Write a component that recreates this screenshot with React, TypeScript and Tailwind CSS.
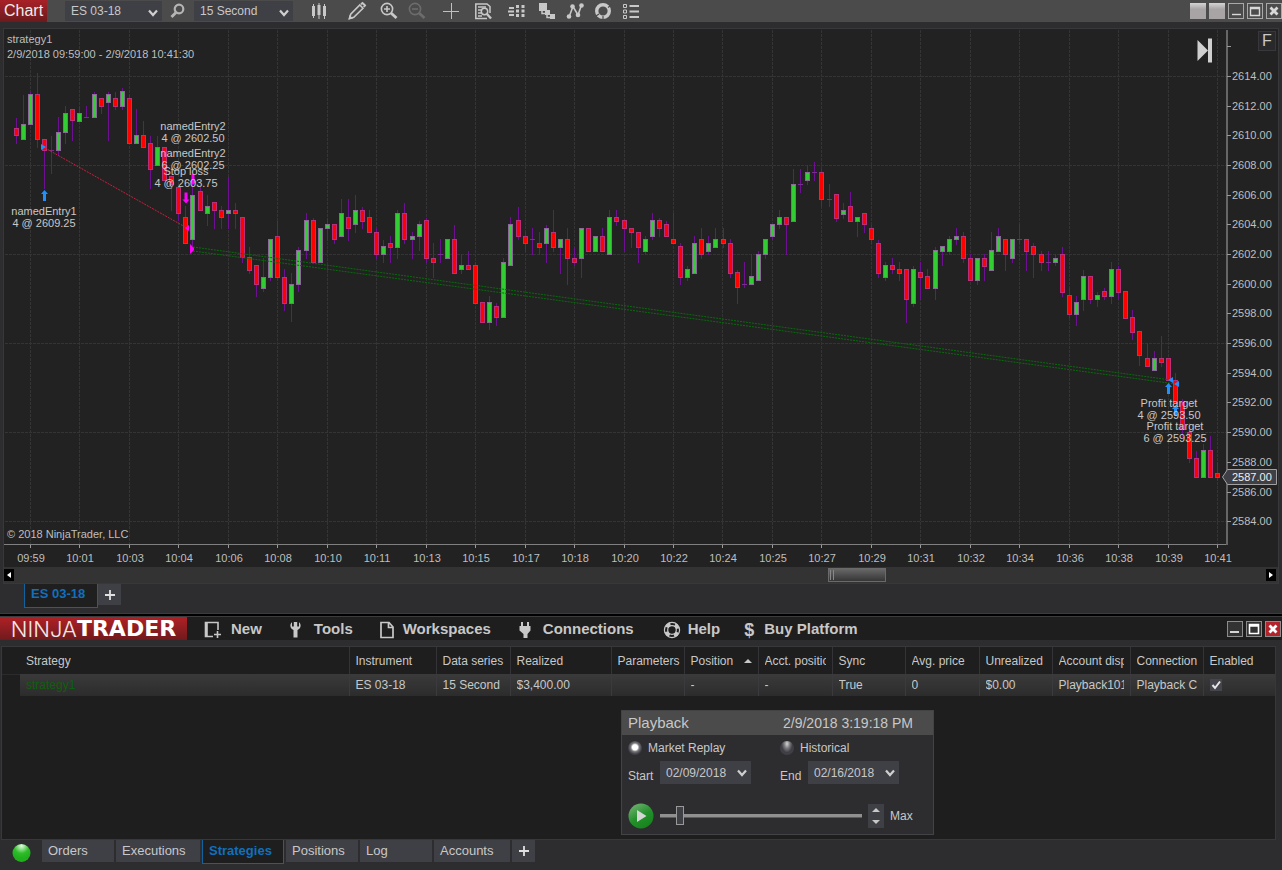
import { ReactNode } from "react"

type Candle = [high: number, top: number, bottom: number, low: number, kind: "u" | "d" | "n"]

// high, body top, body bottom, low in chart units; u = up, d = down, n = unchanged
const candles: Candle[] = [
    [118, 128, 135, 143, "d"], [95, 124, 139, 139, "u"], [92, 94, 124, 124, "u"], [73, 94, 139, 147, "d"],
    [139, 139, 150, 188, "d"], [136, 150, 150, 173, "n"], [117, 132, 150, 154, "u"], [106, 113, 132, 143, "u"],
    [109, 109, 120, 140, "d"], [106, 113, 121, 121, "u"], [106, 117, 117, 117, "n"], [92, 94, 117, 117, "u"],
    [98, 98, 106, 113, "d"], [92, 94, 102, 140, "u"], [92, 98, 106, 109, "d"], [88, 91, 106, 109, "u"],
    [95, 98, 143, 143, "d"], [109, 135, 143, 143, "u"], [121, 135, 147, 147, "d"], [136, 143, 169, 188, "d"],
    [136, 147, 165, 165, "u"], [147, 147, 180, 180, "d"], [176, 176, 184, 210, "d"], [187, 187, 213, 220, "d"],
    [206, 217, 243, 243, "d"], [183, 195, 239, 245, "u"], [187, 191, 210, 210, "d"], [195, 206, 213, 225, "u"],
    [202, 202, 210, 228, "d"], [206, 210, 217, 228, "d"], [177, 210, 213, 228, "u"], [203, 210, 213, 228, "d"],
    [217, 217, 257, 262, "d"], [247, 257, 270, 273, "d"], [265, 265, 284, 296, "d"], [258, 277, 288, 291, "u"],
    [239, 239, 277, 280, "u"], [221, 236, 277, 280, "d"], [269, 277, 303, 310, "d"], [273, 284, 303, 321, "u"],
    [247, 250, 284, 291, "u"], [213, 220, 250, 258, "u"], [218, 220, 262, 262, "d"], [228, 228, 262, 262, "u"],
    [218, 224, 228, 240, "u"], [224, 224, 239, 243, "d"], [199, 213, 236, 236, "u"], [199, 217, 228, 240, "d"],
    [195, 210, 224, 232, "u"], [207, 210, 221, 228, "d"], [210, 217, 232, 232, "d"], [228, 232, 254, 258, "d"],
    [240, 246, 254, 262, "u"], [236, 243, 247, 262, "d"], [210, 213, 247, 258, "u"], [203, 213, 239, 243, "d"],
    [232, 236, 239, 258, "u"], [221, 224, 236, 250, "u"], [218, 220, 258, 262, "d"], [243, 258, 262, 277, "d"],
    [239, 254, 254, 262, "n"], [239, 239, 258, 258, "u"], [225, 239, 273, 273, "d"], [254, 265, 269, 273, "u"],
    [251, 265, 269, 269, "d"], [262, 265, 303, 303, "d"], [302, 302, 322, 322, "d"], [296, 302, 322, 329, "u"],
    [303, 306, 317, 325, "d"], [258, 262, 317, 317, "u"], [217, 224, 265, 265, "u"], [207, 220, 236, 239, "d"],
    [232, 236, 243, 251, "d"], [228, 239, 239, 254, "n"], [232, 243, 247, 254, "d"], [225, 228, 243, 262, "u"],
    [210, 232, 247, 251, "d"], [239, 239, 247, 273, "u"], [228, 239, 258, 284, "d"], [247, 258, 262, 265, "d"],
    [228, 228, 258, 277, "u"], [228, 228, 251, 251, "d"], [236, 236, 251, 251, "u"], [228, 236, 251, 251, "d"],
    [210, 217, 254, 254, "u"], [210, 217, 221, 225, "d"], [220, 220, 228, 251, "d"], [228, 228, 232, 247, "d"],
    [232, 232, 247, 262, "d"], [236, 239, 251, 254, "u"], [213, 220, 236, 239, "u"], [218, 220, 228, 236, "d"],
    [221, 224, 236, 236, "d"], [213, 239, 243, 243, "d"], [243, 246, 277, 284, "d"], [266, 269, 277, 280, "u"],
    [236, 243, 273, 273, "u"], [228, 239, 254, 258, "d"], [236, 243, 251, 254, "u"], [228, 239, 247, 247, "u"],
    [228, 239, 243, 247, "d"], [239, 243, 273, 277, "d"], [270, 272, 287, 303, "d"], [262, 284, 284, 287, "n"],
    [254, 276, 284, 284, "u"], [251, 254, 280, 280, "u"], [239, 239, 254, 258, "u"], [224, 224, 236, 239, "u"],
    [210, 217, 224, 228, "u"], [217, 217, 224, 254, "d"], [169, 184, 221, 221, "u"], [169, 184, 184, 192, "n"],
    [165, 172, 180, 184, "u"], [162, 172, 172, 180, "n"], [169, 172, 199, 206, "d"], [184, 199, 199, 206, "n"],
    [194, 194, 218, 221, "d"], [203, 210, 214, 218, "u"], [192, 206, 221, 221, "d"], [217, 217, 221, 236, "u"],
    [213, 213, 224, 232, "d"], [225, 228, 239, 243, "d"], [240, 243, 273, 277, "d"], [262, 265, 277, 280, "u"],
    [258, 265, 269, 273, "d"], [262, 269, 273, 280, "d"], [269, 269, 299, 322, "d"], [266, 269, 303, 306, "u"],
    [262, 272, 277, 299, "d"], [269, 276, 288, 288, "d"], [247, 250, 288, 299, "u"], [246, 246, 251, 265, "u"],
    [236, 239, 251, 254, "u"], [228, 236, 239, 244, "u"], [232, 236, 258, 262, "d"], [254, 258, 280, 280, "d"],
    [258, 258, 280, 284, "u"], [254, 258, 266, 280, "d"], [232, 250, 270, 270, "u"], [228, 236, 251, 251, "u"],
    [239, 239, 254, 270, "d"], [239, 239, 258, 262, "u"], [224, 239, 239, 243, "n"], [239, 239, 251, 270, "d"],
    [243, 246, 254, 277, "d"], [251, 254, 262, 270, "d"], [251, 262, 262, 270, "n"], [254, 258, 262, 265, "u"],
    [247, 254, 292, 296, "d"], [288, 295, 314, 317, "d"], [296, 302, 314, 325, "u"], [270, 276, 299, 310, "u"],
    [276, 276, 299, 303, "d"], [292, 295, 299, 306, "u"], [288, 291, 296, 299, "d"], [262, 269, 296, 303, "u"],
    [266, 269, 292, 299, "d"], [291, 291, 318, 318, "d"], [310, 317, 332, 339, "d"], [331, 331, 355, 365, "d"],
    [343, 358, 366, 366, "d"], [351, 358, 370, 370, "u"], [336, 358, 362, 366, "d"], [358, 358, 380, 380, "d"],
    [373, 380, 403, 403, "d"], [399, 402, 429, 436, "d"], [423, 432, 458, 462, "d"], [451, 458, 477, 477, "d"],
    [444, 450, 477, 477, "u"], [436, 450, 477, 477, "d"], [462, 473, 477, 480, "d"],
]

const times = [
    "09:59", "10:01", "10:03", "10:04", "10:06", "10:08", "10:10", "10:11", "10:13", "10:15", "10:17", "10:18", "10:20",
    "10:22", "10:24", "10:25", "10:27", "10:29", "10:31", "10:32", "10:34", "10:36", "10:38", "10:39", "10:41",
]

const prices = Array.from({ length: 16 }, (_, i) => 2614 - i * 2)

const labels = [
    { x: 44, y: 215, lines: ["namedEntry1", "4 @ 2609.25"] },
    { x: 193, y: 130, lines: ["namedEntry2", "4 @ 2602.50"] },
    { x: 193, y: 157, lines: ["namedEntry2", "6 @ 2602.25"] },
    { x: 186, y: 175, lines: ["Stop loss", "4 @ 2603.75"] },
    { x: 1169, y: 407, lines: ["Profit target", "4 @ 2593.50"] },
    { x: 1175, y: 430, lines: ["Profit target", "6 @ 2593.25"] },
]

const candleX = (i: number) => Math.floor(16.3 + i * 7.067)
const timeX = (i: number) => Math.floor(30.5 + i * 49.46)
const priceY = (i: number) => Math.round(76 + i * 29.68)

function PriceChart() {
    return (
        <svg viewBox="4 29 1274 538" className="block w-full text-[11px]" role="img" aria-label="ES 03-18 price chart">
            <g stroke="#343434" strokeDasharray="3 1" fill="none">
                {times.map((t, i) => (
                    <path key={t} d={`M${timeX(i) + 0.5} 30V544`} />
                ))}
                {[0, 3, 6, 9, 12, 15].map((i) => (
                    <path key={i} d={`M5 ${priceY(i) + 0.5}H1226`} />
                ))}
            </g>

            <g shapeRendering="crispEdges">
                {candles.map(([high, top, bottom, low, kind], i) => {
                    const x = candleX(i)
                    return (
                        <g key={i}>
                            <rect x={x} y={high} width="1" height={low - high + 1} fill="#6d1092" />
                            {kind === "n" ? (
                                <rect x={x - 2} y={top} width="5" height="1" fill="#7b2c90" />
                            ) : (
                                <>
                                    <rect
                                        x={x - 2}
                                        y={top}
                                        width="5"
                                        height={bottom - top + 1}
                                        fill={kind === "u" ? "#8a6a96" : "#b8307a"}
                                    />
                                    <rect
                                        x={x - 1}
                                        y={top + 1}
                                        width="3"
                                        height={bottom - top - 1}
                                        fill={kind === "u" ? "#32cd32" : "#ff0000"}
                                    />
                                </>
                            )}
                        </g>
                    )
                })}
            </g>

            {/* trade lines */}
            <g fill="none">
                <path d="M45 148L187 228" stroke="#c8203c" strokeDasharray="2 1" />
                <path d="M193 247L1171 380M193 251L1176 384" stroke="#076b0b" strokeDasharray="2 1" />
            </g>
            <g fill="#1e90ff">
                <path d="M41 144v6l5-3zM1173 377v6l-5-3zM1179 381v6l-5-3z" />
                <path d="M44.500 190l3.500 4h-2v7h-3v-7h-2zM1168.500 383l3.500 4h-2v7h-3v-7h-2zM1175.500 405l3.500 4h-2v7h-3v-7h-2z" />
            </g>
            <g fill="#ff00ff">
                <path d="M189 225v6l-4-3zM190 244v10l4-4v-2z" />
                <path d="M186 203.500l3.500-4h-2v-7h-3v7h-2zM193 185l3.500-4h-2v-7h-3v7h-2z" />
            </g>

            <g fill="#c8c8c8" textAnchor="middle">
                {labels.map((l) =>
                    l.lines.map((line, n) => (
                        <text key={line + n} x={l.x} y={l.y + n * 12}>
                            {line}
                        </text>
                    ))
                )}
            </g>

            <g fill="#bfbfbf">
                <text x="7" y="43">strategy1</text>
                <text x="7" y="58">2/9/2018 09:59:00 - 2/9/2018 10:41:30</text>
                <text x="7" y="538">© 2018 NinjaTrader, LLC</text>
            </g>

            {/* axes */}
            <path d="M4 544.500H1227" stroke="#808080" fill="none" />
            <path d="M1227 30V545" stroke="#666666" strokeWidth="2" />
            <g fill="#bfbfbf">
                <path d="M1227 46.500h4" stroke="#9a9a9a" />
                {prices.map((p, i) => (
                    <g key={p}>
                        <path d={`M1227 ${priceY(i) + 0.5}h4`} stroke="#9a9a9a" />
                        <text x="1232" y={priceY(i) + 4}>{p.toFixed(2)}</text>
                    </g>
                ))}
                {times.map((t, i) => (
                    <g key={t} textAnchor="middle">
                        <path d={`M${timeX(i) + 0.5} 545v3`} stroke="#9a9a9a" />
                        <text x={timeX(i) + 1} y="562">{t}</text>
                    </g>
                ))}
            </g>

            <path d="M1222.500 477L1227.500 469.500H1276.500V484.500H1227.500Z" fill="#3f3f46" stroke="#a0a0a0" />
            <text x="1232" y="481" fill="#f0f0f0">2587.00</text>

            <path d="M1197.500 40L1208 50.500L1197.500 61z" fill="#d0d0d0" />
            <path d="M1208 38.500h4v24h-4z" fill="#d0d0d0" />
        </svg>
    )
}

function Chevron({ className }: { className: string }) {
    return (
        <svg viewBox="0 0 10 8" className={`pointer-events-none absolute h-2 w-2.5 ${className}`}>
            <path d="M1 1.500L5 6L9 1.500" fill="none" stroke="#cfcfcf" strokeWidth="2.200" />
        </svg>
    )
}

function Combo({ label, value, className }: { label: string; value: string; className: string }) {
    return (
        <div className="relative">
            <select
                aria-label={label}
                defaultValue={value}
                className={`block appearance-none bg-[#3f3f46] pl-1.5 text-xs text-[#c8c8c8] outline-none ${className}`}
            >
                <option>{value}</option>
            </select>
            <Chevron className="top-2 right-1" />
        </div>
    )
}

const tools: { name: string; margin: string; icon: ReactNode }[] = [
    {
        name: "Chart style",
        margin: "ml-4",
        icon: (
            <g fill="#c8c8c8">
                <path d="M3 5h3v10H3zM8.500 4h3v10h-3zM14 5h3v10h-3z" />
                <path d="M4 3h1v14H4zM9.500 2h1v16h-1zM15 3h1v15h-1z" />
            </g>
        ),
    },
    {
        name: "Drawing tools",
        margin: "ml-4.5",
        icon: (
            <g fill="none" stroke="#c8c8c8" strokeWidth="1.600">
                <path d="M2.500 17.500L3.700 13.200L12.800 4L16 7.200L6.800 16.300Z" />
                <path d="M14 3.200L15.500 2L18 4.400L16.800 6" strokeWidth="2" />
                <path d="M2.500 17.500l2-.5-1.500-1.500z" fill="#c8c8c8" />
            </g>
        ),
    },
    {
        name: "Zoom in",
        margin: "ml-3",
        icon: (
            <g fill="none" stroke="#c8c8c8" strokeWidth="1.600">
                <circle cx="8" cy="8" r="5.600" />
                <path d="M5 8h6M8 5v6" />
                <path d="M12 12l5.500 5" strokeWidth="2.800" />
            </g>
        ),
    },
    {
        name: "Zoom out",
        margin: "ml-2",
        icon: (
            <g fill="none" stroke="#6c6c6c" strokeWidth="1.600">
                <circle cx="8" cy="8" r="5.600" />
                <path d="M5 8h6" />
                <path d="M12 12l5.500 5" strokeWidth="2.800" />
            </g>
        ),
    },
    {
        name: "Crosshair",
        margin: "ml-3.5",
        icon: <path d="M2 10.500h16M10.500 2v16" stroke="#c0c0c0" fill="none" />,
    },
    {
        name: "Data box",
        margin: "ml-3",
        icon: (
            <g fill="none" stroke="#c8c8c8" strokeWidth="1.500">
                <path d="M17 12V5.500L14 3H2.800v14.500H14" />
                <path d="M5 6h8M5 9h3M5 12h3M5 15h4" />
                <circle cx="11.500" cy="10.500" r="3.200" fill="#4b4b4b" />
                <path d="M14 13l4 4.500" strokeWidth="2.400" />
            </g>
        ),
    },
    {
        name: "Chart trader",
        margin: "ml-3.5",
        icon: (
            <g fill="#c8c8c8">
                <path d="M2 6h5v2H2zM1 9.500h6v2H1zM2 13h5v2H2zM9 4h3v3H9zM9 8.500h3v3H9zM9 13h3v3H9zM14.500 4h3v3h-3zM14.500 8.500h3v3h-3zM14.500 13h3v3h-3z" />
            </g>
        ),
    },
    {
        name: "Data series",
        margin: "ml-2.5",
        icon: (
            <g fill="#c8c8c8">
                <path d="M2 2h8v8H2zM13 13h5v5h-5zM8 9h5v5H8z" />
                <path d="M5 10v2.500h5M10 13v3.500h4" fill="none" stroke="#c8c8c8" strokeWidth="1.500" />
            </g>
        ),
    },
    {
        name: "Indicators",
        margin: "ml-2",
        icon: (
            <g fill="#c8c8c8">
                <path d="M4 16L8 5.500L13 14L16.500 4" fill="none" stroke="#c8c8c8" strokeWidth="1.600" />
                <circle cx="4" cy="15.500" r="2.300" />
                <circle cx="7.500" cy="5.500" r="2.300" />
                <circle cx="13" cy="14" r="2.300" />
                <circle cx="16.500" cy="4.500" r="2.300" />
            </g>
        ),
    },
    {
        name: "Strategies",
        margin: "ml-2",
        icon: (
            <g fill="none" stroke="#c8c8c8">
                <circle cx="10" cy="10" r="6.300" strokeWidth="3.400" />
                <path d="M15 6.500l4-3M10 15v4M3 15l3-2" stroke="#4b4b4b" strokeWidth="1.200" />
            </g>
        ),
    },
    {
        name: "Properties",
        margin: "ml-2",
        icon: (
            <g fill="none" stroke="#c8c8c8">
                <path d="M2.500 3.500h3v3h-3zM2.500 9h3v3h-3zM2.500 14.500h3v3h-3z" />
                <path d="M8.500 5H18M8.500 10.500H18M8.500 16H18" strokeWidth="1.800" />
            </g>
        ),
    },
]

const menu: { name: string; className: string; icon: ReactNode }[] = [
    {
        name: "New",
        className: "ml-4 gap-2",
        icon: (
            <path d="M15 10V2.500H2.500v14H10M14.500 11v7M11 14.500h7M4 2.500v14" fill="none" stroke="currentColor" strokeWidth="1.600" />
        ),
    },
    {
        name: "Tools",
        className: "ml-6 gap-2",
        icon: (
            <path d="M6 2.200C3.500 4 3.800 8.500 7.500 10V17.500h4V10C15.200 8.500 15.500 4 13 2.200V6.500H11.200V2H7.800V6.500H6z" fill="currentColor" />
        ),
    },
    {
        name: "Workspaces",
        className: "ml-6 gap-1.5",
        icon: (
            <path d="M4 2.500h8L16 7v10.500H4zM11.500 3v4.500H16" fill="none" stroke="currentColor" strokeWidth="1.700" />
        ),
    },
    {
        name: "Connections",
        className: "ml-6 gap-2",
        icon: (
            <path d="M6 2h2v4h4V2h2v4h1.500v4.500L12.500 14v4h-4v-4l-4-3.500V6H6z" fill="currentColor" />
        ),
    },
    {
        name: "Help",
        className: "ml-7 gap-1.5",
        icon: (
            <g fill="none" stroke="currentColor">
                <circle cx="10" cy="10" r="7.600" strokeWidth="1.200" />
                <circle cx="10" cy="10" r="4.300" strokeWidth="1.200" />
                <circle cx="10" cy="10" r="6" strokeWidth="3.600" strokeDasharray="4.700 4.725" strokeDashoffset="-2.350" />
            </g>
        ),
    },
]

function Wordmark() {
    return (
        <div className="flex h-[23px] w-[187px] items-center justify-center overflow-hidden bg-linear-to-b from-[#b02025] to-[#701a1d] leading-none text-[#f2e9e9]">
            <span className="font-['Inter'] text-[22px] font-light">NINJA</span>
            <span className="font-['DejaVu_Sans'] text-[22px] font-bold text-white">TRADER</span>
        </div>
    )
}

const columns = [
    { title: "Instrument", value: "ES 03-18", className: "w-[87px] px-1.5" },
    { title: "Data series", value: "15 Second", className: "w-[74px] px-1.5" },
    { title: "Realized", value: "$3,400.00", className: "w-[101px] px-1.5" },
    { title: "Parameters", value: "", className: "w-[73px] pl-1.5" },
    { title: "Position", value: "-", className: "w-[74px] px-1.5", sorted: true },
    { title: "Acct. position", value: "-", className: "w-[74px] px-1.5" },
    { title: "Sync", value: "True", className: "w-[73px] px-1.5" },
    { title: "Avg. price", value: "0", className: "w-[74px] px-1.5" },
    { title: "Unrealized", value: "$0.00", className: "w-[73px] px-1.5" },
    { title: "Account display", value: "Playback101", className: "w-[78px] px-1.5" },
    { title: "Connection", value: "Playback C", className: "w-[73px] pl-1.5" },
]

function StrategyTable() {
    return (
        <table className="w-full table-fixed border-collapse text-left text-xs text-[#c8c8c8]">
            <thead>
                <tr className="h-[27px]">
                    <th className="w-[18px]"></th>
                    <th className="pl-1.5 font-normal">Strategy</th>
                    {columns.map((c) => (
                        <th key={c.title} className={`${c.className} border-l border-[#343438] font-normal`}>
                            <div className="flex items-center justify-between overflow-hidden whitespace-nowrap">
                                {c.title}
                                {c.sorted && (
                                    <svg viewBox="0 0 8 4" className="h-1 w-2">
                                        <path d="M0 4L4 0L8 4z" fill="#c8c8c8" />
                                    </svg>
                                )}
                            </div>
                        </th>
                    ))}
                    <th className="w-[72px] border-l border-[#343438] pl-1.5 font-normal">Enabled</th>
                </tr>
            </thead>
            <tbody>
                <tr className="h-[22px]">
                    <td className="border-t border-[#2b2b2e]"></td>
                    <td className="bg-linear-to-b from-[#3a3a3a] to-[#2c2c2c] pl-1.5 text-[#0d600d]">strategy1</td>
                    {columns.map((c) => (
                        <td
                            key={c.title}
                            className={`${c.className} border-l border-[#3b3b3f] bg-linear-to-b from-[#3a3a3a] to-[#2c2c2c]`}
                        >
                            <div className="overflow-hidden whitespace-nowrap">{c.value}</div>
                        </td>
                    ))}
                    <td className="border-l border-[#3b3b3f] bg-linear-to-b from-[#3a3a3a] to-[#2c2c2c] pl-1.5">
                        <div className="relative size-3 bg-[#45454d]">
                            <input
                                type="checkbox"
                                defaultChecked
                                aria-label="Enabled"
                                className="peer absolute inset-0 size-3 appearance-none"
                            />
                            <svg viewBox="0 0 12 12" className="pointer-events-none invisible absolute size-3 peer-checked:visible">
                                <path d="M2.500 6L5 9L10 2.500" fill="none" stroke="#e6e6e6" strokeWidth="2" />
                            </svg>
                        </div>
                    </td>
                </tr>
            </tbody>
        </table>
    )
}

const radio =
    "size-3.5 appearance-none rounded-full bg-[radial-gradient(ellipse_at_50%_20%,#d4d4d4_0%,#77777b_30%,#3f3f46_55%)] checked:bg-[radial-gradient(circle_at_50%_45%,#ffffff_25%,#77777c_42%,#3f3f46_65%)]"

function PlaybackWindow() {
    return (
        <section className="absolute top-[63px] left-[619px] w-[313px] border border-[#434346] bg-[#2d2d30] text-xs text-[#c8c8c8]">
            <header className="flex h-6 items-center justify-between bg-[#4b4b4b] pr-5 pl-1.5">
                <h2 className="text-[15px]">Playback</h2>
                <span className="text-sm">2/9/2018 3:19:18 PM</span>
            </header>
            <div className="grid h-[26px] grid-cols-[152px_1fr] items-center pl-1.5">
                <label className="flex items-center gap-1.5">
                    <input type="radio" name="mode" defaultChecked className={radio} />
                    Market Replay
                </label>
                <label className="flex items-center gap-1.5">
                    <input type="radio" name="mode" className={radio} />
                    Historical
                </label>
            </div>
            <div className="grid grid-cols-[152px_1fr] pl-1.5">
                {[
                    ["Start", "02/09/2018", "w-8"],
                    ["End", "02/16/2018", "w-7"],
                ].map(([name, date, width]) => (
                    <div key={name} className="flex items-center">
                        <span className={`${width} pt-1.5`}>{name}</span>
                        <Combo label={name} value={date} className="h-[23px] w-[91px]" />
                    </div>
                ))}
            </div>
            <div className="mt-4 mb-0.5 flex h-8 items-center pl-1.5">
                <button aria-label="Play">
                    <svg viewBox="0 0 26 26" className="size-[26px]">
                        <defs>
                            <linearGradient id="play" x1="0" y1="0" x2="0.600" y2="1">
                                <stop offset="0" stopColor="#7fb87f" />
                                <stop offset="0.600" stopColor="#23902b" />
                                <stop offset="1" stopColor="#17851c" />
                            </linearGradient>
                        </defs>
                        <circle cx="13" cy="13" r="12.500" fill="url(#play)" />
                        <path d="M9 7L18.500 13L9 19z" fill="#d6d6d6" />
                    </svg>
                </button>
                <input
                    type="range"
                    aria-label="Playback position"
                    defaultValue={8}
                    className="ml-1.5 h-5 w-[202px] appearance-none bg-transparent [&::-webkit-slider-runnable-track]:h-1 [&::-webkit-slider-runnable-track]:border-b [&::-webkit-slider-runnable-track]:border-[#5c5c5c] [&::-webkit-slider-runnable-track]:bg-[#909090] [&::-webkit-slider-thumb]:-mt-2 [&::-webkit-slider-thumb]:h-[19px] [&::-webkit-slider-thumb]:w-2 [&::-webkit-slider-thumb]:appearance-none [&::-webkit-slider-thumb]:border [&::-webkit-slider-thumb]:border-[#999999] [&::-webkit-slider-thumb]:bg-[#3f3f46]"
                />
                <div className="ml-1.5 flex h-6 w-4 flex-col bg-[#3f3f46]">
                    <button aria-label="Faster" className="flex flex-1 items-center justify-center">
                        <svg viewBox="0 0 8 4" className="h-1 w-2"><path d="M0 4L4 0L8 4z" fill="#c8c8c8" /></svg>
                    </button>
                    <button aria-label="Slower" className="flex flex-1 items-center justify-center">
                        <svg viewBox="0 0 8 4" className="h-1 w-2"><path d="M0 0L4 4L8 0z" fill="#c8c8c8" /></svg>
                    </button>
                </div>
                <span className="ml-1.5">Max</span>
            </div>
        </section>
    )
}

const tabs = [
    { name: "Orders", className: "w-[72px]" },
    { name: "Executions", className: "w-[84px]" },
    { name: "Strategies", className: "w-[82px]", active: true },
    { name: "Positions", className: "w-[72px]" },
    { name: "Log", className: "w-[72px]" },
    { name: "Accounts", className: "w-[76px]" },
]

function Plus() {
    return (
        <svg viewBox="0 0 10 10" className="size-2.5">
            <path d="M5 0v10M0 5h10" stroke="#e0e0e0" strokeWidth="1.800" />
        </svg>
    )
}

export default function App() {
    return (
        <div className="flex min-h-screen flex-col bg-[#2d2d30] font-['Liberation_Sans',Arial,sans-serif] text-[#c8c8c8]">
            <header className="flex h-[22px] items-center bg-[#4b4b4b]">
                <h1 className="flex h-full w-[47px] items-center bg-linear-to-b from-[#a82127] to-[#6c1a1d] pl-1 text-base text-[#ededed]">
                    Chart
                </h1>
                <div className="ml-4.5">
                    <Combo label="Instrument" value="ES 03-18" className="h-5 w-[97px]" />
                </div>
                <button aria-label="Search" className="mx-1.5">
                    <svg viewBox="0 0 20 20" className="size-5" fill="none" stroke="#b4b4b4">
                        <circle cx="11" cy="8" r="4.300" strokeWidth="2.200" />
                        <path d="M8 11.500L3.500 16" strokeWidth="2.800" />
                    </svg>
                </button>
                <Combo label="Interval" value="15 Second" className="h-5 w-[99px]" />
                {tools.map((t) => (
                    <button key={t.name} aria-label={t.name} className={t.margin}>
                        <svg viewBox="0 0 20 20" className="size-5">{t.icon}</svg>
                    </button>
                ))}
                <div className="ml-auto flex gap-[3px]">
                    <span className="size-4 bg-linear-to-b from-[#d4d4d4] to-[#a8a3a5] to-40%" />
                    <span className="size-4 bg-linear-to-b from-[#d4d4d4] to-[#a8a3a5] to-40%" />
                    {[
                        ["Minimize", "M4 11.500h9"],
                        ["Maximize", "M3.500 4.500h9v8h-9zM3.500 5.500h9"],
                        ["Close", "M4.500 4.500l7 7M11.500 4.500l-7 7"],
                    ].map(([name, d]) => (
                        <button key={name} aria-label={name} className="size-4 border border-[#a8a8a8]">
                            <svg viewBox="1 1 14 14" className="size-3.5">
                                <path d={d} fill="none" stroke="#d8d8d8" strokeWidth={name === "Close" ? 2.8 : 1.4} />
                            </svg>
                        </button>
                    ))}
                </div>
            </header>

            <section className="relative mx-[3px] mt-1.5 border border-[#38383b] bg-[#222222]">
                <PriceChart />
                <button className="absolute top-0.5 right-0.5 h-5 w-4.5 border border-[#38383c] bg-[#29292c] text-base leading-none">
                    F
                </button>
                <div className="flex h-4 items-center justify-between bg-[#333333] pr-0.5">
                    <button aria-label="Scroll left" className="flex h-3 w-2.5 items-center justify-center bg-black">
                        <svg viewBox="0 0 4 6" className="h-1.5 w-1"><path d="M4 0v6L0 3z" fill="#ffffff" /></svg>
                    </button>
                    <div className="flex flex-1 pl-[64%]">
                        <div className="flex h-3.5 w-[58px] gap-0.5 border border-[#6a6a6a] bg-linear-to-b from-[#686868] to-[#363636] p-px">
                            <span className="w-px bg-[#888888]" />
                            <span className="w-px bg-[#888888]" />
                        </div>
                    </div>
                    <button aria-label="Scroll right" className="flex h-3 w-2.5 items-center justify-center bg-black">
                        <svg viewBox="0 0 4 6" className="h-1.5 w-1"><path d="M0 0v6L4 3z" fill="#ffffff" /></svg>
                    </button>
                </div>
            </section>

            <nav className="flex h-[29px] items-start pl-6 text-[13px]">
                <button className="h-6 w-[74px] border border-t-0 border-[#1362a0] bg-[#1f1f1f] pb-1 pl-1.5 text-left font-bold text-[#1070bd]">
                    ES 03-18
                </button>
                <button aria-label="Add tab" className="flex h-[21px] w-[23px] items-center justify-center bg-[#3f3f46]">
                    <Plus />
                </button>
            </nav>
            <div className="h-1 border-y border-[#3c3c3f] bg-black" />

            <div className="flex h-[23px] items-center bg-[#1e1e1e]">
                <Wordmark />
                <nav className="flex items-center pt-0.5 text-[15px] font-bold">
                    {menu.map((m) => (
                        <button key={m.name} className={`flex items-center ${m.className}`}>
                            <svg viewBox="0 0 20 20" className="size-5">{m.icon}</svg>
                            {m.name}
                        </button>
                    ))}
                    <button className="ml-6 flex items-center gap-2.5">
                        <span className="text-lg leading-none">$</span>
                        Buy Platform
                    </button>
                </nav>
                <div className="mr-px ml-auto flex gap-[3px]">
                    {[
                        ["Minimize", "M3 11h9", "bg-[#333333]"],
                        ["Maximize", "M3.500 3.500h9v9h-9zM3.500 5h9", "bg-[#333333]"],
                        ["Close", "M4.500 4.500l7 7M11.500 4.500l-7 7", "bg-[#b3232b]"],
                    ].map(([name, d, bg]) => (
                        <button key={name} aria-label={name} className={`size-4 border border-[#8c8c8c] ${bg}`}>
                            <svg viewBox="1 1 14 14" className="size-3.5">
                                <path d={d} fill="none" stroke="#ffffff" strokeWidth={name === "Close" ? 2.8 : 1.6} />
                            </svg>
                        </button>
                    ))}
                </div>
            </div>

            <section className="relative mt-1.5 mr-1.5 ml-px flex-1 border border-[#38383b] bg-[#1e1e1e]">
                <StrategyTable />
                <PlaybackWindow />
            </section>

            <footer className="flex h-[30px] items-start pl-3 text-[13px]">
                <svg viewBox="0 0 20 20" className="mt-1 mr-2.5 size-5">
                    <defs>
                        <radialGradient id="status" cx="0.500" cy="0.100" r="0.700">
                            <stop offset="0" stopColor="#e2ffe0" />
                            <stop offset="0.600" stopColor="#2fbd2a" />
                            <stop offset="1" stopColor="#20b01c" />
                        </radialGradient>
                    </defs>
                    <circle cx="9.500" cy="9" r="9" fill="url(#status)" />
                </svg>
                <nav className="flex items-start gap-0.5">
                    {tabs.map((t) =>
                        t.active ? (
                            <button
                                key={t.name}
                                className={`h-6 border border-t-0 border-[#1362a0] bg-[#1e1e1e] pb-0.5 pl-1.5 text-left font-bold text-[#1070bd] ${t.className}`}
                            >
                                {t.name}
                            </button>
                        ) : (
                            <button key={t.name} className={`h-[22px] bg-[#3f3f46] pl-1.5 text-left ${t.className}`}>
                                {t.name}
                            </button>
                        )
                    )}
                    <button aria-label="Add tab" className="flex h-[22px] w-[23px] items-center justify-center bg-[#3f3f46]">
                        <Plus />
                    </button>
                </nav>
            </footer>
        </div>
    )
}
